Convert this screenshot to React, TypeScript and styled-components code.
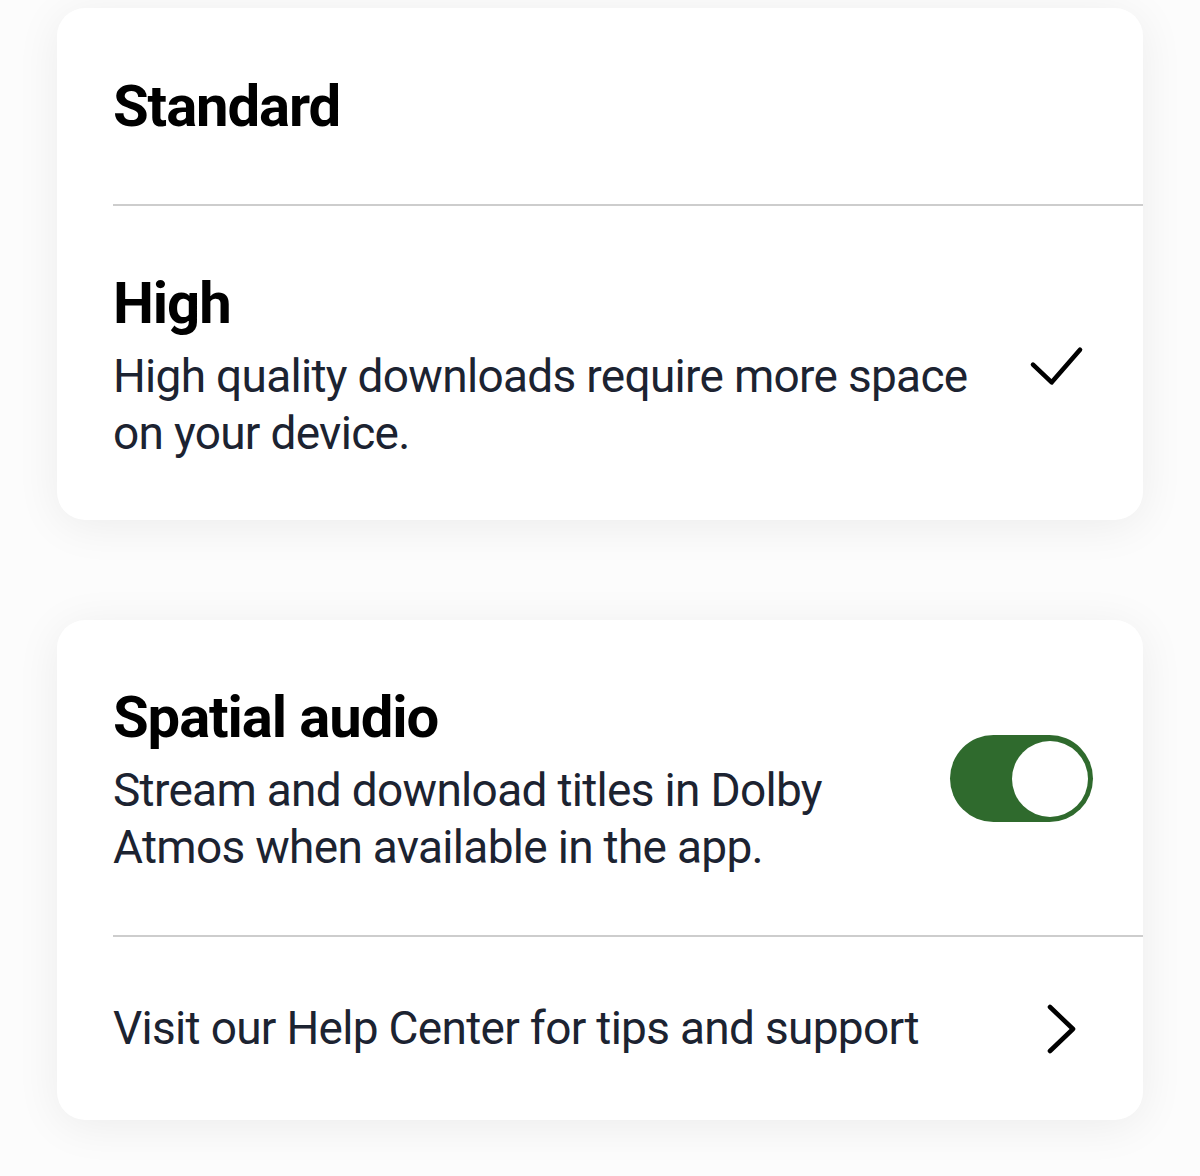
import React from "react";
import styled, { createGlobalStyle } from "styled-components";

const GlobalStyle = createGlobalStyle`
  html, body {
    margin: 0;
    padding: 0;
    background: #fcfcfc;
    font-family: Roboto, "Liberation Sans", Arial, sans-serif;
    -webkit-font-smoothing: antialiased;
  }
  * { box-sizing: border-box; }
`;

const Page = styled.div`
  display: flex;
  flex-direction: column;
  gap: 100px;
  padding: 8px 57px 56px;
  background: #fcfcfc;
`;

const Card = styled.section`
  background: #ffffff;
  border-radius: 28px;
  box-shadow: 0 6px 46px rgba(0, 0, 0, 0.065);
  overflow: hidden;
`;

const Row = styled.div<{ $padTop: number; $padBottom: number }>`
  display: flex;
  align-items: center;
  padding: ${(p) => p.$padTop}px 50px ${(p) => p.$padBottom}px 56px;
`;

const TextCol = styled.div`
  flex: 1;
  min-width: 0;
  display: flex;
  flex-direction: column;
  gap: 12px;
`;

const Title = styled.h2`
  margin: 0;
  font-size: 58px;
  line-height: 66px;
  font-weight: 700;
  letter-spacing: -1.1px;
  color: #000000;
`;

const Description = styled.p<{ $maxWidth?: number }>`
  margin: 0;
  font-size: 46px;
  line-height: 57px;
  font-weight: 400;
  letter-spacing: -0.7px;
  color: #1c2331;
  max-width: ${(p) => (p.$maxWidth ? `${p.$maxWidth}px` : "none")};
`;

const Divider = styled.hr`
  margin: 0 0 0 56px;
  border: none;
  height: 2px;
  background: #cdcdcd;
`;

const IconSlot = styled.div`
  flex: none;
  display: flex;
  align-items: center;
`;

const Track = styled.div`
  flex: none;
  width: 143px;
  height: 87px;
  margin-top: -3px;
  border-radius: 44px;
  background: #2f6a2d;
  display: flex;
  align-items: center;
  justify-content: flex-end;
  padding: 0 5px;
`;

const Knob = styled.div`
  width: 76px;
  height: 76px;
  border-radius: 50%;
  background: #ffffff;
`;

const CheckIcon = () => (
  <svg width="64" height="48" viewBox="0 0 64 48" fill="none">
    <polyline
      points="4,22.7 22.7,40.3 51,7.7"
      stroke="#000"
      strokeWidth="4.6"
      strokeLinecap="round"
      strokeLinejoin="round"
    />
  </svg>
);

const ChevronIcon = () => (
  <svg width="64" height="56" viewBox="0 0 64 56" fill="none">
    <polyline
      points="21,6 44,28 21,50"
      stroke="#000"
      strokeWidth="4.6"
      strokeLinecap="round"
      strokeLinejoin="round"
    />
  </svg>
);

export default function App() {
  return (
    <>
      <GlobalStyle />
      <Page>
        <Card>
          <Row $padTop={65} $padBottom={65}>
            <TextCol>
              <Title>Standard</Title>
            </TextCol>
          </Row>
          <Divider />
          <Row $padTop={64} $padBottom={58}>
            <TextCol>
              <Title>High</Title>
              <Description $maxWidth={890}>
                High quality downloads require more space on your device.
              </Description>
            </TextCol>
            <IconSlot>
              <CheckIcon />
            </IconSlot>
          </Row>
        </Card>

        <Card>
          <Row $padTop={64} $padBottom={59}>
            <TextCol>
              <Title>Spatial audio</Title>
              <Description $maxWidth={780}>
                Stream and download titles in Dolby Atmos when available in the app.
              </Description>
            </TextCol>
            <Track>
              <Knob />
            </Track>
          </Row>
          <Divider />
          <Row $padTop={63} $padBottom={63}>
            <TextCol>
              <Description>Visit our Help Center for tips and support</Description>
            </TextCol>
            <IconSlot>
              <ChevronIcon />
            </IconSlot>
          </Row>
        </Card>
      </Page>
    </>
  );
}
